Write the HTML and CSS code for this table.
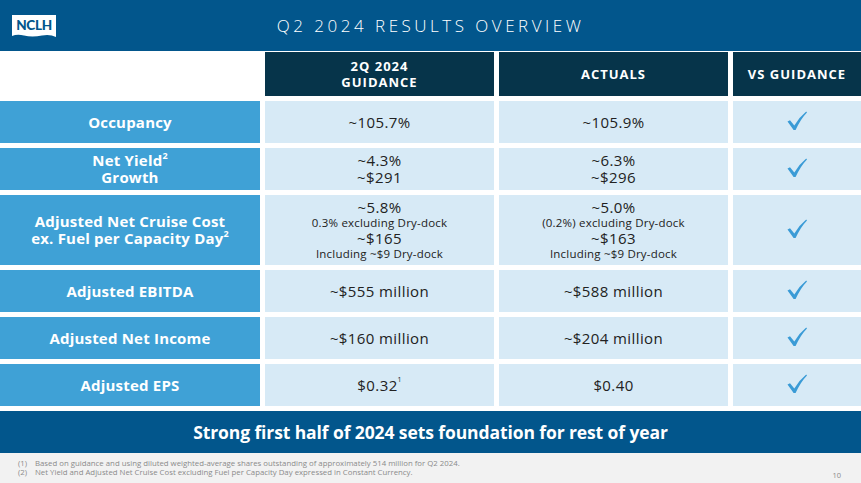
FILE: index.html
```html
<!DOCTYPE html>
<html>
<head>
<meta charset="utf-8">
<link rel="stylesheet" href="styles.css">
</head>
<body>
<div class="slide">
  <header class="topbar">
    <div class="logo">
      <svg width="44" height="23" viewBox="0 0 44 23">
        <path d="M0 0 H44 V22 Q38 19 30 20.5 Q20 22.5 12 20.5 Q5 19 0 21 Z" fill="#fff"/>
      </svg>
      <span class="logo-text">NCLH</span>
    </div>
    <h1 class="title">Q2 2024 RESULTS OVERVIEW</h1>
    <div></div>
  </header>

  <div class="table">
    <div class="blank"></div>
    <div class="head"><span>2Q 2024<br>GUIDANCE</span></div>
    <div class="head"><span>ACTUALS</span></div>
    <div class="head"><span>VS GUIDANCE</span></div>

    <div class="label"><span>Occupancy</span></div>
    <div class="cell"><span>~105.7%</span></div>
    <div class="cell"><span>~105.9%</span></div>
    <div class="cell check"><svg class="tick" viewBox="0 0 20 20"><path d="M0.5 10.5 L3 9.2 L7.3 14.6 Q12 6.5 19.2 0.6 L20 1.4 Q13.5 8 8.6 19 L6.6 19 Z"/></svg></div>

    <div class="label"><span>Net Yield<sup>2</sup><br>Growth</span></div>
    <div class="cell two"><span>~4.3%</span><span>~$291</span></div>
    <div class="cell two"><span>~6.3%</span><span>~$296</span></div>
    <div class="cell check"><svg class="tick" viewBox="0 0 20 20"><path d="M0.5 10.5 L3 9.2 L7.3 14.6 Q12 6.5 19.2 0.6 L20 1.4 Q13.5 8 8.6 19 L6.6 19 Z"/></svg></div>

    <div class="label"><span>Adjusted Net Cruise Cost<br>ex. Fuel per Capacity Day<sup>2</sup></span></div>
    <div class="cell multi">
      <span>~5.8%</span>
      <span class="small">0.3% excluding Dry-dock</span>
      <span>~$165</span>
      <span class="small">Including ~$9 Dry-dock</span>
    </div>
    <div class="cell multi">
      <span>~5.0%</span>
      <span class="small">(0.2%) excluding Dry-dock</span>
      <span>~$163</span>
      <span class="small">Including ~$9 Dry-dock</span>
    </div>
    <div class="cell check"><svg class="tick" viewBox="0 0 20 20"><path d="M0.5 10.5 L3 9.2 L7.3 14.6 Q12 6.5 19.2 0.6 L20 1.4 Q13.5 8 8.6 19 L6.6 19 Z"/></svg></div>

    <div class="label"><span>Adjusted EBITDA</span></div>
    <div class="cell"><span>~$555 million</span></div>
    <div class="cell"><span>~$588 million</span></div>
    <div class="cell check"><svg class="tick" viewBox="0 0 20 20"><path d="M0.5 10.5 L3 9.2 L7.3 14.6 Q12 6.5 19.2 0.6 L20 1.4 Q13.5 8 8.6 19 L6.6 19 Z"/></svg></div>

    <div class="label"><span>Adjusted Net Income</span></div>
    <div class="cell"><span>~$160 million</span></div>
    <div class="cell"><span>~$204 million</span></div>
    <div class="cell check"><svg class="tick" viewBox="0 0 20 20"><path d="M0.5 10.5 L3 9.2 L7.3 14.6 Q12 6.5 19.2 0.6 L20 1.4 Q13.5 8 8.6 19 L6.6 19 Z"/></svg></div>

    <div class="label"><span>Adjusted EPS</span></div>
    <div class="cell"><span>$0.32<sup class="fn">1</sup></span></div>
    <div class="cell"><span>$0.40</span></div>
    <div class="cell check"><svg class="tick" viewBox="0 0 20 20"><path d="M0.5 10.5 L3 9.2 L7.3 14.6 Q12 6.5 19.2 0.6 L20 1.4 Q13.5 8 8.6 19 L6.6 19 Z"/></svg></div>
  </div>

  <div class="banner">Strong first half of 2024 sets foundation for rest of year</div>

  <footer class="footer">
    <div class="notes">
      <div class="note"><span class="num">(1)</span><span>Based on guidance and using diluted weighted-average shares outstanding of approximately 514 million for Q2 2024.</span></div>
      <div class="note"><span class="num">(2)</span><span>Net Yield and Adjusted Net Cruise Cost excluding Fuel per Capacity Day expressed in Constant Currency.</span></div>
    </div>
    <div class="page">10</div>
  </footer>
</div>
</body>
</html>
```

FILE: styles.css
```css
* { box-sizing: border-box; margin: 0; padding: 0; }
html, body { width: 861px; height: 483px; overflow: hidden; background: #fff; }
body { font-family: "Open Sans", "Liberation Sans", sans-serif; }

.slide { display: flex; flex-direction: column; width: 861px; height: 483px; }

.topbar {
  height: 51px;
  background: #02568c;
  display: grid;
  grid-template-columns: 1fr auto 1fr;
  align-items: center;
  padding: 0 12px;
}
.logo {
  position: relative;
  width: 44px;
  height: 23px;
  margin-top: 2px;
}
.logo svg { display: block; }
.logo-text {
  position: absolute;
  left: 0; right: 0; top: 3px;
  text-align: center;
  font-family: "Lato", "Liberation Sans", sans-serif;
  font-weight: 900;
  font-size: 13.5px;
  letter-spacing: -0.3px;
  color: #02568c;
  line-height: 14px;
}
.title {
  font-family: "Open Sans", sans-serif;
  font-weight: 300;
  font-size: 17px;
  letter-spacing: 3.5px;
  color: #fff;
  line-height: 20px;
  white-space: nowrap;
}

.table {
  margin-top: 1px;
  display: grid;
  grid-template-columns: 260px 229px 229px 1fr;
  grid-template-rows: 44px 42px 42px 70px 42px 42px 42px;
  column-gap: 5px;
  row-gap: 5px;
}
.blank { background: #fff; }
.head {
  background: #06344a;
  color: #fff;
  font-weight: 700;
  font-size: 13px;
  letter-spacing: 1px;
  line-height: 16px;
  display: flex;
  align-items: center;
  justify-content: center;
  text-align: center;
}
.label {
  background: #3fa1d6;
  color: #fff;
  font-weight: 700;
  font-size: 15px;
  letter-spacing: 0.2px;
  line-height: 17px;
  display: flex;
  align-items: center;
  justify-content: center;
  text-align: center;
}
.label sup { font-size: 9px; vertical-align: top; line-height: 10px; position: relative; top: -1px; }
.cell {
  background: #d7eaf6;
  color: #222;
  font-size: 15px;
  letter-spacing: 0.4px;
  line-height: 18px;
  display: flex;
  align-items: center;
  justify-content: center;
  text-align: center;
}
.cell.two, .cell.multi { flex-direction: column; }
.cell.two span { display: block; line-height: 17px; }
.cell.multi span { display: block; line-height: 17px; }
.cell .small { font-size: 11.5px; letter-spacing: 0.2px; line-height: 14px !important; }
.cell .fn { font-size: 7px; vertical-align: top; line-height: 8px; letter-spacing: 0; }
.tick { width: 20px; height: 20px; fill: #3a9bd6; margin-top: -2px; }

.banner {
  margin-top: 5px;
  height: 42px;
  background: #02568c;
  color: #fff;
  font-family: "Open Sans", sans-serif;
  font-weight: 700;
  font-size: 17.5px;
  letter-spacing: -0.1px;
  display: flex;
  align-items: center;
  justify-content: center;
}

.footer {
  flex: 1;
  background: #f2f2f2;
  display: flex;
  align-items: flex-start;
  justify-content: space-between;
  padding: 6px 20px 0 18px;
  color: #8a8a8a;
  font-size: 7.8px;
  line-height: 9px;
}
.note { display: flex; }
.note .num { width: 17px; }
.page { font-size: 7.5px; margin-top: 12px; }
```
